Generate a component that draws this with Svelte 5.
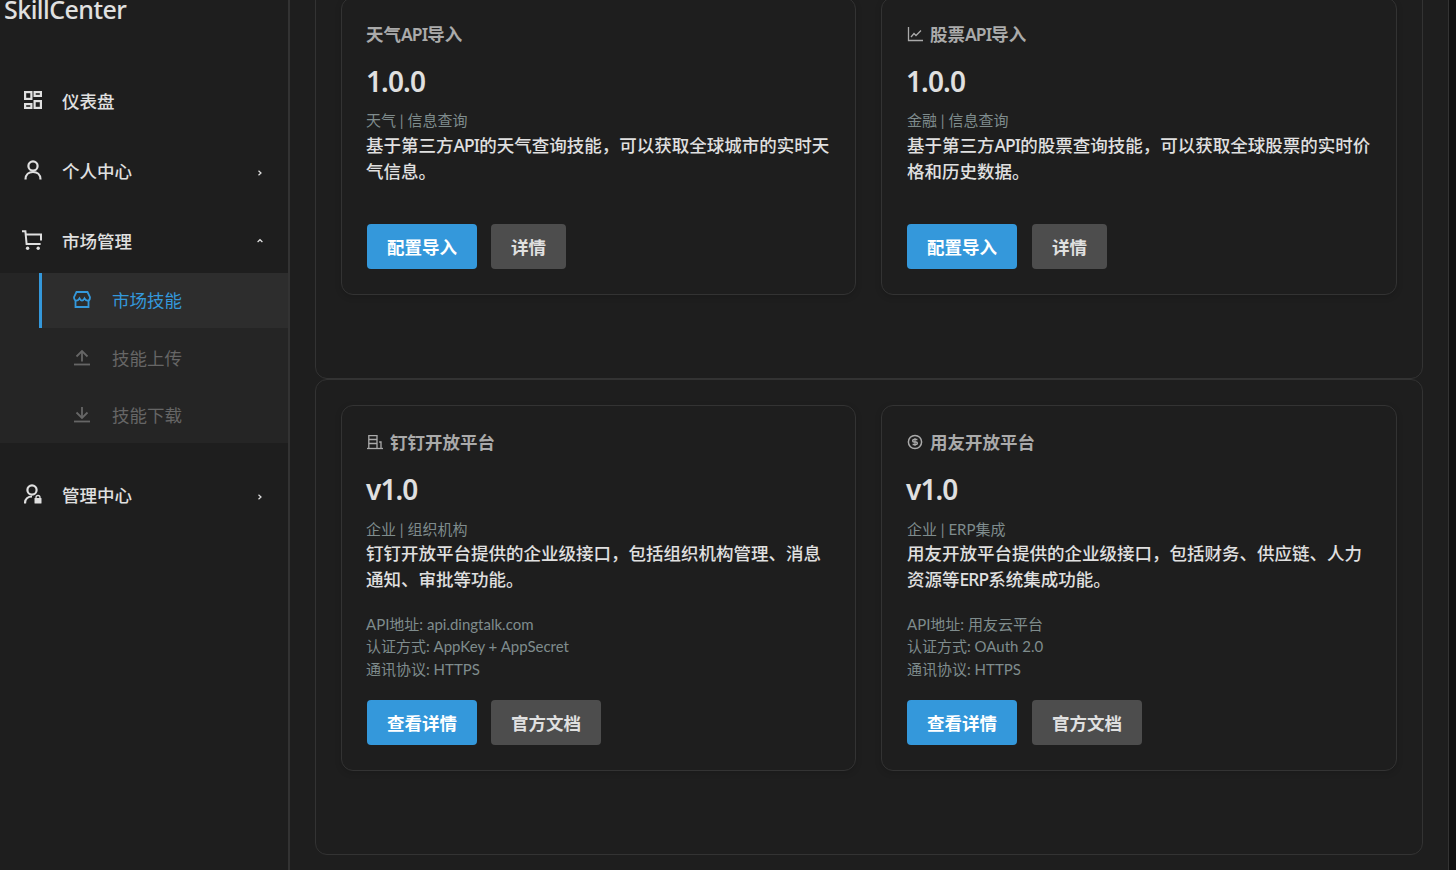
<script>
  const topCards = [
    { icon: null, title: '天气API导入', ver: '1.0.0', meta: '天气 | 信息查询', desc: '基于第三方API的天气查询技能，可以获取全球城市的实时天气信息。' },
    { icon: 'chart', title: '股票API导入', ver: '1.0.0', meta: '金融 | 信息查询', desc: '基于第三方API的股票查询技能，可以获取全球股票的实时价格和历史数据。' }
  ];
  const bottomCards = [
    { icon: 'building', title: '钉钉开放平台', ver: 'v1.0', meta: '企业 | 组织机构', desc: '钉钉开放平台提供的企业级接口，包括组织机构管理、消息通知、审批等功能。', info: ['API地址: api.dingtalk.com', '认证方式: AppKey + AppSecret', '通讯协议: HTTPS'] },
    { icon: 'coin', title: '用友开放平台', ver: 'v1.0', meta: '企业 | ERP集成', desc: '用友开放平台提供的企业级接口，包括财务、供应链、人力资源等ERP系统集成功能。', info: ['API地址: 用友云平台', '认证方式: OAuth 2.0', '通讯协议: HTTPS'] }
  ];
  const parts = (s) => s.split(/([A-Za-z]+)/);
</script>

{#snippet titleIcon(kind)}
  {#if kind === 'chart'}
    <svg class="ti" viewBox="-1 0 16 16" fill="none" stroke="currentColor" stroke-width="1.3"><path d="M.5 1V14.5H15"/><path d="M3 11L6 7.5L8 9.5L13 4.5"/></svg>
  {:else if kind === 'building'}
    <svg class="ti" viewBox="0 0 16 16" fill="none" stroke="currentColor" stroke-width="1.3"><path d="M0 14.5H16"/><path d="M1.8 14.5V1.6H10V14.5"/><path d="M1.8 5.5H10M1.8 9.5H10"/><path d="M12.2 8H14V14.5"/></svg>
  {:else if kind === 'coin'}
    <svg class="ti" viewBox="0 0 16 16" fill="none" stroke="currentColor" stroke-width="1.5"><circle cx="8" cy="8" r="6.6"/><path d="M10.4 5.4H7a1.3 1.3 0 0 0 0 2.6h2a1.3 1.3 0 0 1 0 2.6H5.6"/><path d="M8 4V12" stroke-width="1.1"/></svg>
  {/if}
{/snippet}

{#snippet mixed(s)}
  {#each parts(s) as p, i}{#if i % 2}<span class="latin">{p}</span>{:else}{p}{/if}{/each}
{/snippet}

{#snippet card(c, actions)}
  <article class="card">
    <h3 class="title" class:plain={!c.icon}>{#if c.icon}{@render titleIcon(c.icon)}{/if}<span>{@render mixed(c.title)}</span></h3>
    <div class="ver">{c.ver}</div>
    <div class="meta">{c.meta}</div>
    <p class="desc">{@render mixed(c.desc)}</p>
    {#if c.info}
      <div class="info">{#each c.info as l}<div>{l}</div>{/each}</div>
    {/if}
    <div class="btns" class:withinfo={c.info}>
      <button class="btn primary">{actions[0]}</button>
      <button class="btn">{actions[1]}</button>
    </div>
  </article>
{/snippet}

<div class="shell">
  <aside class="side">
    <div class="logo">SkillCenter</div>
    <nav class="menu">
      <div class="row">
        <svg class="mi" viewBox="0 0 18 18" fill="none" stroke="currentColor" stroke-width="2.2"><rect x="1.1" y="1.1" width="6.3" height="6.8"/><rect x="10.6" y="1.1" width="6.3" height="3.8"/><rect x="1.1" y="13.1" width="6.3" height="3.8"/><rect x="10.6" y="10.1" width="6.3" height="6.8"/></svg>
        <span>仪表盘</span>
      </div>
      <div class="row">
        <svg class="mi" viewBox="0 0 18 20" fill="none" stroke="currentColor" stroke-width="2.2"><circle cx="9" cy="6" r="4.6"/><path d="M1.5 19.5C1.5 14.5 5 12 9 12S16.5 14.5 16.5 19.5"/></svg>
        <span>个人中心</span>
        <svg class="chev low" viewBox="0 0 6 6" fill="none" stroke="currentColor" stroke-width="1.2"><path d="M1.5 .8L4 3L1.5 5.2"/></svg>
      </div>
      <div class="row">
        <svg class="mi cart" viewBox="0 0 20 20" fill="none" stroke="currentColor" stroke-width="2"><path d="M0 1.2H3.4L4.6 14H18.6"/><path d="M4 4.4H19V10.5"/><circle cx="5.6" cy="18.2" r="1.7" fill="currentColor" stroke="none"/><circle cx="16.2" cy="18.2" r="1.7" fill="currentColor" stroke="none"/></svg>
        <span>市场管理</span>
        <svg class="chev up" viewBox="0 0 6 6" fill="none" stroke="currentColor" stroke-width="1.2"><path d="M.6 4L3 1.7L5.4 4"/></svg>
      </div>
      <div class="sub">
        <div class="subrow active">
          <svg class="si" viewBox="0 0 18 17" fill="none" stroke="currentColor" stroke-width="1.8"><path d="M3.5 1H14.5L17 6.2C17 8.4 15.6 9.6 14.6 9.6C13 9.6 12 8.4 11.5 7.4C11 8.4 10 9.6 9 9.6S7 8.4 6.5 7.4C6 8.4 5 9.6 3.4 9.6C2.4 9.6 1 8.4 1 6.2Z"/><path d="M2.5 9V16H15.5V9"/></svg>
          <span>市场技能</span>
        </div>
        <div class="subrow">
          <svg class="si" viewBox="0 0 18 17" fill="none" stroke="currentColor" stroke-width="1.8"><path d="M1 15.5H17"/><path d="M9 12.5V2"/><path d="M3.5 7.5L9 2L14.5 7.5"/></svg>
          <span>技能上传</span>
        </div>
        <div class="subrow">
          <svg class="si" viewBox="0 0 18 17" fill="none" stroke="currentColor" stroke-width="1.8"><path d="M1 15.5H17"/><path d="M9 1V11.5"/><path d="M3.5 6.5L9 12L14.5 6.5"/></svg>
          <span>技能下载</span>
        </div>
      </div>
      <div class="row admin">
        <svg class="mi" viewBox="0 0 18 20" fill="none" stroke="currentColor" stroke-width="2.2"><circle cx="8" cy="6" r="4.6"/><path d="M1 19.5C1 15 4 12.5 8 12.5"/><rect x="10.5" y="14" width="7" height="5.6" rx=".6" fill="currentColor" stroke="none"/><path d="M12 14.5V13.5A2 2 0 0 1 16 13.5V14.5" stroke-width="1.3"/></svg>
        <span>管理中心</span>
        <svg class="chev low" viewBox="0 0 6 6" fill="none" stroke="currentColor" stroke-width="1.2"><path d="M1.5 .8L4 3L1.5 5.2"/></svg>
      </div>
    </nav>
  </aside>
  <main class="main">
    <section class="panel">
      <div class="grid">
        {#each topCards as c}{@render card(c, ['配置导入', '详情'])}{/each}
      </div>
    </section>
    <section class="panel">
      <div class="grid">
        {#each bottomCards as c}{@render card(c, ['查看详情', '官方文档'])}{/each}
      </div>
    </section>
  </main>
  <div class="rail"></div>
</div>

<style>
  :global(body) {
    margin: 0;
    background: #1e1e1e;
    overflow: hidden;
    font-family: "Noto Sans", "Noto Sans CJK SC", sans-serif;
  }
  .shell { display: flex; height: 870px; overflow: hidden; color: #e0e0e0; }
  .side {
    width: 290px; flex: none; box-sizing: border-box;
    border-right: 2px solid #333; background: #1e1e1e;
  }
  .logo { font-size: 25px; line-height: 30px; margin-top: -6px; padding-left: 4px; font-weight: 500; letter-spacing: -.55px; color: #e0e0e0; }
  .menu { margin-top: 41px; }
  .row { display: flex; align-items: center; height: 70px; padding-left: 24px; padding-right: 24px; font-size: 17.5px; font-weight: 500; }
  .row span { margin-left: 20px; }
  .row.admin { margin-top: 16px; }
  .mi { width: 18px; height: 20px; flex: none; }
  .cart { width: 20px; margin-left: -2px; }
  .chev { width: 6px; height: 6px; margin-left: auto; position: relative; left: -1px; }
  .chev.low { top: 3px; }
  .chev.up { top: 1px; }
  .sub { background: #252525; margin-top: -2px; }
  .subrow { display: flex; align-items: center; height: 57.5px; padding-left: 73px; font-size: 17.5px; color: #666; }
  .subrow.active { height: 55px; color: #3498db; background: #2d2d2d; border-left: 3px solid #3498db; padding-left: 31px; margin-left: 39px; padding-bottom: 2px; box-sizing: border-box; }
  .subrow.active + .subrow { padding-top: 1px; box-sizing: border-box; }
  .subrow span { margin-left: 21px; }
  .si { width: 18px; height: 17px; flex: none; }

  .main { flex: 1; box-sizing: border-box; padding: 0 25px; margin-top: -29px; }
  .panel { border: 1px solid #333; border-radius: 12px; padding: 25px 25px 83px; background: #1e1e1e; }
  .grid { display: grid; grid-template-columns: 515fr 516fr; gap: 25px; }
  .card { border: 1px solid #333; border-radius: 12px; padding: 24px 25px 25px; background: #1e1e1e; box-shadow: 0 2px 6px rgba(0,0,0,.15); }
  .title { display: flex; align-items: center; gap: 7px; margin: 0; font-size: 17.5px; line-height: 24px; font-weight: 600; color: #aaa; }
  .ti { width: 16px; height: 16px; flex: none; }
  .latin { letter-spacing: -.9px; }
  .ver { font-size: 28px; line-height: 40px; margin: 15px 0 0 -1px; font-weight: 600; letter-spacing: -.9px; color: #e0e0e0; }
  .meta { font-family: "Lato", "Noto Sans CJK SC", sans-serif; font-size: 15px; line-height: 20px; margin-top: 9.3px; color: #7f8c8d; }
  .desc { margin: 1.7px -2px 0 0; font-size: 17.5px; line-height: 26px; color: #e0e0e0; min-height: 52.5px; font-weight: 500; }
  .info { font-family: "Lato", "Noto Sans CJK SC", sans-serif; margin-top: 20px; font-size: 15px; line-height: 22.5px; color: #7f8c8d; }
  .card:first-child .desc, .card:first-child .meta, .card:first-child .info, .card:first-child .title.plain { margin-left: -1px; }
  .btns { display: flex; gap: 14px; margin-top: 40px; }
  .btns.withinfo { margin-top: 20px; }
  .card:last-child .btn:last-child { margin-left: 1px; }
  .btn { height: 45px; padding: 0 20px; border: 0; border-radius: 4px; background: #4d4d4d; color: #e0e0e0; font: inherit; font-size: 17.5px; font-weight: 700; }
  .btn.primary { background: #3498db; color: #fff; }
  .rail { width: 7px; flex: none; background: #111; border-left: 1px solid #333; }
</style>
